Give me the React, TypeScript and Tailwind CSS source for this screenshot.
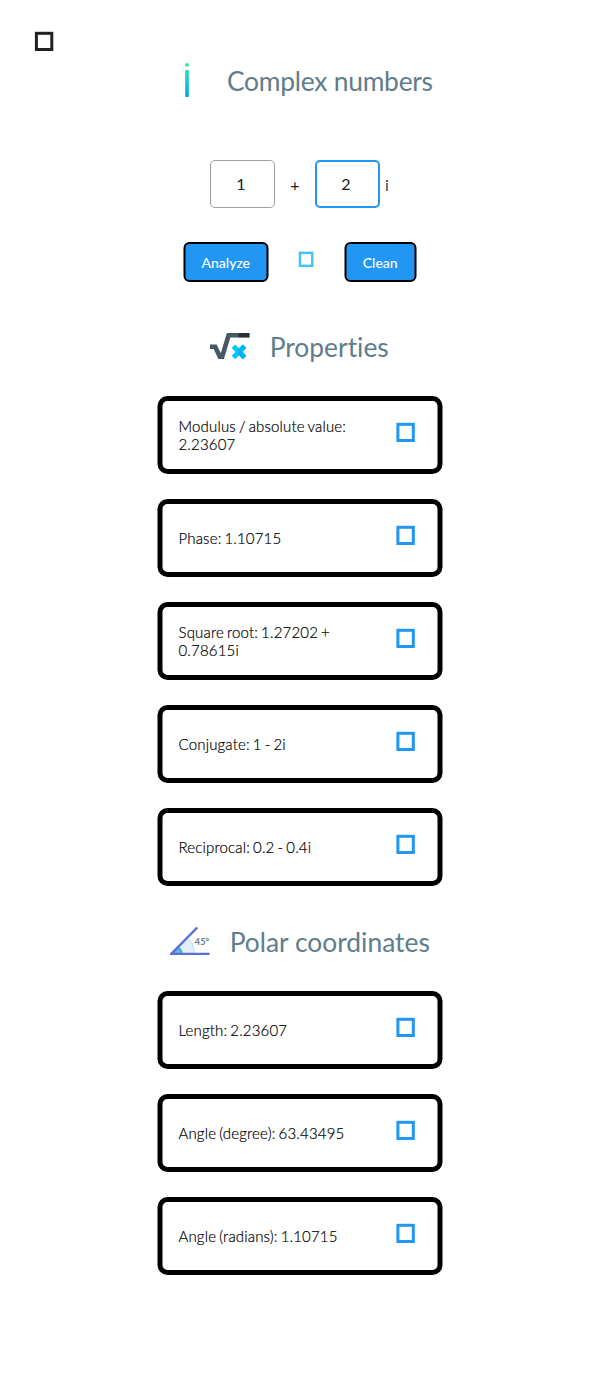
import React, { useState } from "react";

function Box({ className }: { className: string }) {
  return (
    <svg viewBox="0 0 20 20" className={className} fill="none" stroke="currentColor" strokeWidth="3">
      <rect x="2.4" y="2.3" width="15.4" height="16.2" />
    </svg>
  );
}

function ImaginaryIcon() {
  return (
    <svg width="6" height="36" viewBox="0 0 6 36" className="shrink-0">
      <defs>
        <linearGradient id="unit" x1="0" y1="0" x2="0" y2="36" gradientUnits="userSpaceOnUse">
          <stop offset="0" stopColor="#2af598" />
          <stop offset="1" stopColor="#009efd" />
        </linearGradient>
      </defs>
      <rect x="1.2" y="1.2" width="3.6" height="3.2" rx="0.6" fill="url(#unit)" />
      <rect x="1.2" y="8" width="3.6" height="27" rx="0.4" fill="url(#unit)" />
    </svg>
  );
}

function RootIcon() {
  return (
    <svg width="40" height="28" viewBox="0 0 40 28" className="shrink-0">
      <path d="M0 13.8H5.2L9.8 23.6H12.2L18.6 2.3H29" fill="none" stroke="#455a64" strokeWidth="4.6" />
      <path d="M28.7 0H39.6V4.6H28.7z" fill="#263238" />
      <path d="M23.4 13.2L34.6 24.4M34.6 13.2L23.4 24.4" stroke="#00c8ff" strokeWidth="4.9" />
      <path d="M29 18.8L34.6 13.2M29 18.8L34.6 24.4" stroke="#00b4f5" strokeWidth="4.9" />
    </svg>
  );
}

function AngleIcon() {
  return (
    <svg width="40" height="30" viewBox="0 0 40 30" className="ml-px shrink-0">
      <path d="M2 27L17 11C22 14 24.6 19 24.6 27Z" fill="#e0f0fe" />
      <path d="M17 11C22 14 24.2 19 24.2 27" fill="none" stroke="#c9e4fc" strokeWidth="1.3" />
      <path d="M2 27L8.3 20.5C11 22 12 24 12 27Z" fill="#64b5f6" />
      <path d="M8.3 20.5C11 22 11.7 24 11.7 27" fill="none" stroke="#1fc28b" strokeWidth="1.5" />
      <path d="M27.3 0.5L1.3 26.9H39.6" fill="none" stroke="#5c6fd6" strokeWidth="2.4" />
      <text x="24.8" y="18.2" fontSize="9" fontWeight="700" fill="#607d8b" fontFamily="Lato, sans-serif" textLength="14.5">45°</text>
    </svg>
  );
}

function Heading({ children, icon }: { children: string; icon: React.ReactNode }) {
  return (
    <div className="-ml-px flex items-center justify-center gap-5">
      {icon}
      <h2 className="-ml-[0.5px] text-[26.4px] leading-8 font-normal whitespace-nowrap text-[#607d8b] [font-variant-ligatures:none]">{children}</h2>
    </div>
  );
}

function Card({ text }: { text: string }) {
  return (
    <div className="-ml-px flex h-[78px] w-[285px] translate-x-[0.5px] items-center justify-between rounded-[10px] border-[5px] border-black pr-[22px] pl-4">
      <p className="w-[180px] text-[15px] leading-[18px] font-light tracking-[0.17px] text-black [-webkit-text-stroke:0.2px_#000] [word-spacing:-1.2px]">{text}</p>
      <button aria-label="Copy" className="-mt-1.5 text-[#2196f3]">
        <Box className="size-5" />
      </button>
    </div>
  );
}

const properties = [
  "Modulus / absolute value: 2.23607",
  "Phase: 1.10715",
  "Square root: 1.27202 + 0.78615i",
  "Conjugate: 1 - 2i",
  "Reciprocal: 0.2 - 0.4i",
];
const polar = ["Length: 2.23607", "Angle (degree): 63.43495", "Angle (radians): 1.10715"];

export default function App() {
  const [real, setReal] = useState("1");
  const [imaginary, setImaginary] = useState("2");
  const field = "h-12 w-[65px] rounded-[5px] bg-white pr-[3px] pb-0.5 text-center text-base text-[#212121] outline-none ";
  const button = "-ml-px h-10 translate-x-[0.5px] rounded-[6px] border-2 border-black bg-[#2196f3] pt-0.5 text-sm font-medium text-white";

  return (
    <main className="flex h-[1394px] flex-col bg-white px-[34px] pt-[31px] font-['Lato',sans-serif]">
      <button aria-label="Menu" className="size-5 text-[#212121]">
        <Box className="size-5" />
      </button>
      <div className="mt-[11px] ml-[150px] flex items-center gap-[37px]">
        <ImaginaryIcon />
        <h1 className="mt-0.5 text-[26.4px] leading-8 font-normal tracking-[-0.25px] whitespace-nowrap text-[#607d8b]">Complex numbers</h1>
      </div>
      <div className="mt-[62px] ml-[176px] flex items-center text-base text-[#212121]">
        <input aria-label="Real part" value={real} onChange={(e) => setReal(e.target.value)} className={field + "border border-[#9e9e9e]"} />
        <span className="w-10 pt-0.5 text-center">+</span>
        <input aria-label="Imaginary part" value={imaginary} onChange={(e) => setImaginary(e.target.value)} className={field + "border-2 border-[#2196f3]"} />
        <span className="ml-[5px] pt-0.5 text-[#424242]">i</span>
      </div>
      <div className="mt-[34px] flex items-center justify-center">
        <button className={button + " w-[85px]"}>Analyze</button>
        <span className="-mt-1.5 mr-[31px] ml-[30.5px] text-[#40c4ff]">
          <Box className="size-4" />
        </span>
        <button className={button + " w-[72px] pr-px"}>Clean</button>
      </div>
      <section className="mt-[49px]">
        <Heading icon={<RootIcon />}>Properties</Heading>
        <div className="mt-[33px] flex flex-col items-center gap-[25px]">
          {properties.map((text) => <Card key={text} text={text} />)}
        </div>
      </section>
      <section className="mt-10">
        <Heading icon={<AngleIcon />}>Polar coordinates</Heading>
        <div className="mt-[33px] flex flex-col items-center gap-[25px]">
          {polar.map((text) => <Card key={text} text={text} />)}
        </div>
      </section>
    </main>
  );
}
